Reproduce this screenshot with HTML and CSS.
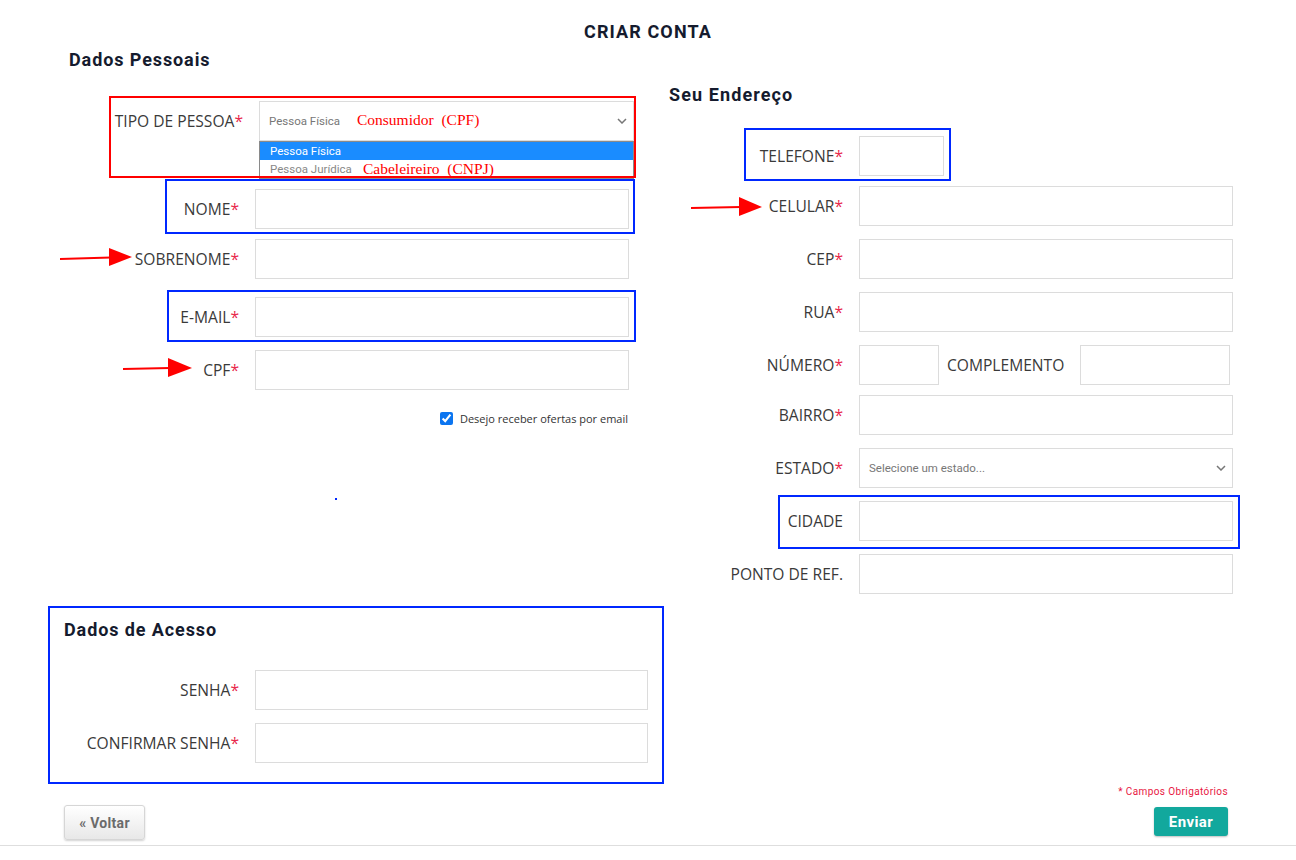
FILE: index.html
```html
<!DOCTYPE html>
<html lang="pt-BR">
<head>
<meta charset="utf-8">
<title>Criar Conta</title>
<link rel="stylesheet" href="styles.css">
</head>
<body>
<div class="page">
  <h1 class="page-title">CRIAR CONTA</h1>

  <div class="columns">
    <section class="col col-left">
      <h2 class="section-title">Dados Pessoais</h2>

      <div class="row row-tipo mt-31">
        <label class="lbl">TIPO DE PESSOA<span class="req">*</span></label>
        <div class="select select-tipo">
          <span class="select-value">Pessoa Física</span>
          <svg class="chev" width="10" height="6" viewBox="0 0 10 6"><path d="M1 1l4 4 4-4" fill="none" stroke="#777" stroke-width="1.5"/></svg>
          <ul class="dropdown">
            <li class="opt opt-active">Pessoa Física</li>
            <li class="opt">Pessoa Jurídica</li>
          </ul>
        </div>
      </div>

      <div class="row mt-48">
        <label class="lbl">NOME<span class="req">*</span></label>
        <div class="field"></div>
      </div>
      <div class="row mt-10">
        <label class="lbl">SOBRENOME<span class="req">*</span></label>
        <div class="field"></div>
      </div>
      <div class="row mt-18">
        <label class="lbl">E-MAIL<span class="req">*</span></label>
        <div class="field"></div>
      </div>
      <div class="row mt-13">
        <label class="lbl">CPF<span class="req">*</span></label>
        <div class="field"></div>
      </div>

      <label class="opt-in">
        <input type="checkbox" class="check" checked>
        <span>Desejo receber ofertas por email</span>
      </label>
    </section>

    <section class="col col-right">
      <h2 class="section-title">Seu Endereço</h2>

      <div class="row mt-31">
        <label class="lbl">TELEFONE<span class="req">*</span></label>
        <div class="field field-phone"></div>
      </div>
      <div class="row mt-10">
        <label class="lbl">CELULAR<span class="req">*</span></label>
        <div class="field"></div>
      </div>
      <div class="row mt-13">
        <label class="lbl">CEP<span class="req">*</span></label>
        <div class="field"></div>
      </div>
      <div class="row mt-13">
        <label class="lbl">RUA<span class="req">*</span></label>
        <div class="field"></div>
      </div>
      <div class="row mt-13">
        <label class="lbl">NÚMERO<span class="req">*</span></label>
        <div class="field field-num"></div>
        <label class="lbl-inline">COMPLEMENTO</label>
        <div class="field field-comp"></div>
      </div>
      <div class="row mt-10">
        <label class="lbl">BAIRRO<span class="req">*</span></label>
        <div class="field"></div>
      </div>
      <div class="row mt-13">
        <label class="lbl">ESTADO<span class="req">*</span></label>
        <div class="select select-estado">
          <span class="select-value">Selecione um estado...</span>
          <svg class="chev" width="10" height="6" viewBox="0 0 10 6"><path d="M1 1l4 4 4-4" fill="none" stroke="#777" stroke-width="1.5"/></svg>
        </div>
      </div>
      <div class="row mt-13">
        <label class="lbl">CIDADE</label>
        <div class="field"></div>
      </div>
      <div class="row mt-13">
        <label class="lbl">PONTO DE REF.</label>
        <div class="field"></div>
      </div>
    </section>
  </div>

  <section class="access">
    <h2 class="section-title">Dados de Acesso</h2>
    <div class="row mt-30">
      <label class="lbl">SENHA<span class="req">*</span></label>
      <div class="field field-wide"></div>
    </div>
    <div class="row mt-13">
      <label class="lbl">CONFIRMAR SENHA<span class="req">*</span></label>
      <div class="field field-wide"></div>
    </div>
  </section>

  <div class="form-footer">
    <button class="btn-back" type="button">« Voltar</button>
    <div class="submit-area">
      <p class="req-note">* Campos Obrigatórios</p>
      <button class="btn-send" type="button">Enviar</button>
    </div>
  </div>

  <div class="annotations">
    <div class="mark mark-red mark-tipo"></div>
    <div class="mark mark-blue mark-nome"></div>
    <div class="mark mark-blue mark-email"></div>
    <div class="mark mark-blue mark-tel"></div>
    <div class="mark mark-blue mark-cidade"></div>
    <div class="mark mark-blue mark-access"></div>
    <div class="dot"></div>
    <div class="note note-cpf">Consumidor  (CPF)</div>
    <div class="note note-cnpj">Cabeleireiro  (CNPJ)</div>
    <svg class="arrows" width="1296" height="860" viewBox="0 0 1296 860">
      <g fill="#ff0000" stroke="#ff0000">
        <line x1="60" y1="259" x2="111" y2="257.5" stroke-width="2"/>
        <polygon points="109,248 132,257 109,266" stroke="none"/>
        <line x1="123" y1="369" x2="170" y2="368" stroke-width="2"/>
        <polygon points="168,358 192,368 168,377" stroke="none"/>
        <line x1="691" y1="208" x2="741" y2="207" stroke-width="2"/>
        <polygon points="739,197 762,207 739,216" stroke="none"/>
      </g>
    </svg>
  </div>
</div>
</body>
</html>
```

FILE: styles.css
```css
* { box-sizing: border-box; }

html, body {
  margin: 0;
  padding: 0;
  background: #fff;
}

body {
  font-family: "Open Sans", "Liberation Sans", sans-serif;
  color: #333;
}

.page {
  position: relative;
  width: 1296px;
  height: 860px;
  overflow: hidden;
}

.page-title {
  margin: 0;
  padding-top: 22px;
  font: 700 18px/20px Roboto, "Liberation Sans", sans-serif;
  letter-spacing: 1.1px;
  text-align: center;
  color: #151b2e;
}

.section-title {
  margin: 0;
  font: 700 18px/20px Roboto, "Liberation Sans", sans-serif;
  letter-spacing: 0.9px;
  color: #151b2e;
}

.columns {
  display: grid;
  grid-template-columns: 614px 577px;
  column-gap: 6px;
  padding-left: 49px;
}

.col-left .section-title {
  margin-top: 8px;
  padding-left: 20px;
}

.col-right .section-title {
  margin-top: 43px;
  letter-spacing: 1.1px;
}

.row {
  display: flex;
  align-items: center;
  height: 40px;
  gap: 16px;
}

.mt-10 { margin-top: 10px; }
.mt-13 { margin-top: 13px; }
.mt-18 { margin-top: 18px; }
.mt-30 { margin-top: 30px; }
.mt-31 { margin-top: 31px; }
.mt-48 { margin-top: 48px; }

.lbl {
  flex: 0 0 190px;
  text-align: right;
  font-size: 15.6px;
  line-height: 20px;
  padding-bottom: 1px;
  color: #3a3a3a;
  white-space: nowrap;
}

.col-right .lbl { flex-basis: 174px; }
.row-tipo .lbl { flex-basis: 194px; }

.req { color: #e8284c; }

.field {
  width: 374px;
  height: 40px;
  border: 1px solid #dcdcdc;
  background: #fff;
  flex: 0 0 auto;
}

.field-phone { width: 85px; }
.field-num { width: 80px; }
.field-comp { width: 150px; }
.field-wide { width: 393px; }

.lbl-inline {
  margin-left: -8px;
  font-size: 15.6px;
  line-height: 20px;
  padding-bottom: 1px;
  color: #3a3a3a;
}

.select {
  position: relative;
  display: flex;
  align-items: center;
  justify-content: space-between;
  width: 374px;
  height: 40px;
  border: 1px solid #dcdcdc;
  background: #fff;
  padding: 0 6px 0 9px;
  font: 400 11.5px Roboto, "Liberation Sans", sans-serif;
  color: #777;
}

.select-tipo { width: 375px; }

.dropdown {
  position: absolute;
  top: 39px;
  left: -1px;
  right: -1px;
  margin: 0;
  padding: 0;
  list-style: none;
  background: #fff;
  border: 1px solid #8a8a8a;
  z-index: 2;
}

.opt {
  height: 18px;
  padding-left: 10px;
  font: 400 11.5px/18px Roboto, "Liberation Sans", sans-serif;
  color: #888;
}

.opt-active {
  background: #1a8cff;
  color: #fff;
}

.opt-in {
  display: flex;
  justify-content: flex-end;
  align-items: center;
  margin-top: 20px;
  padding-right: 35px;
  height: 16px;
  font-size: 11px;
  color: #333;
}

.check {
  width: 13px;
  height: 13px;
  margin: 0 7px 0 0;
  accent-color: #0b75f0;
}

.access {
  width: 614px;
  margin: 13px 0 0 49px;
  padding: 13px 0 20px 15px;
}

.access .lbl { flex-basis: 175px; }

.form-footer {
  display: flex;
  justify-content: space-between;
  align-items: flex-start;
  height: 63px;
  padding: 0 68px 0 64px;
  border-bottom: 1px solid #dedede;
}

.btn-back {
  margin-top: 22px;
  width: 81px;
  height: 35px;
  border: 1px solid #d6d6d6;
  border-radius: 3px;
  background: linear-gradient(#ffffff, #e8e8e8);
  box-shadow: 0 1px 2px rgba(0, 0, 0, 0.18);
  font: 700 14px Roboto, "Liberation Sans", sans-serif;
  letter-spacing: 0.3px;
  color: #6b6b6b;
  padding: 0;
}

.submit-area {
  display: flex;
  flex-direction: column;
  align-items: flex-end;
}

.req-note {
  margin: 3px 0 0;
  font: 400 10px/12px Roboto, "Liberation Sans", sans-serif;
  letter-spacing: 0.4px;
  color: #e8173f;
}

.btn-send {
  margin-top: 9px;
  width: 74px;
  height: 29px;
  border: none;
  border-radius: 3px;
  background: #12a89d;
  box-shadow: 0 1px 2px rgba(0, 0, 0, 0.25);
  font: 700 15px Roboto, "Liberation Sans", sans-serif;
  letter-spacing: 0.4px;
  color: #fff;
  padding: 0;
}

/* annotations drawn over the screenshot */
.annotations {
  position: absolute;
  inset: 0;
  pointer-events: none;
}

.mark {
  position: absolute;
  border: 2px solid;
}

.mark-red { border-color: #ff0000; }
.mark-blue { border-color: #0028ff; }

.mark-tipo { left: 109px; top: 96px; width: 527px; height: 82px; z-index: 3; }
.mark-nome { left: 165px; top: 179px; width: 470px; height: 55px; }
.mark-email { left: 167px; top: 290px; width: 469px; height: 52px; }
.mark-tel { left: 744px; top: 128px; width: 207px; height: 53px; }
.mark-cidade { left: 778px; top: 495px; width: 462px; height: 54px; }
.mark-access { left: 48px; top: 606px; width: 616px; height: 178px; }

.dot {
  position: absolute;
  left: 335px;
  top: 498px;
  width: 2px;
  height: 2px;
  background: #0028ff;
}

.note {
  position: absolute;
  font: 400 15.5px/18px "Liberation Serif", "Times New Roman", serif;
  color: #ff0000;
  white-space: pre;
  z-index: 4;
}

.note-cpf { left: 357px; top: 111px; }
.note-cnpj { left: 363px; top: 160px; }

.arrows {
  position: absolute;
  left: 0;
  top: 0;
}
```
